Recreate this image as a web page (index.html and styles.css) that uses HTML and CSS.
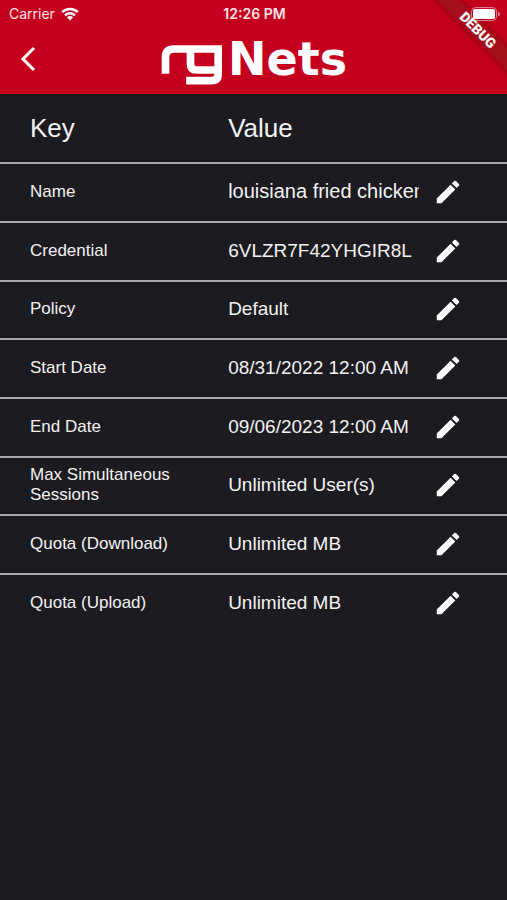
FILE: index.html
```html
<!DOCTYPE html>
<html lang="en">
<head>
    <meta charset="UTF-8">
    <meta name="viewport" content="width=device-width, initial-scale=1.0">
    <title>rgNets</title>
    <link rel="stylesheet" href="styles.css">
</head>
<body>

    <!-- shared pencil icon -->
    <svg class="sprite" aria-hidden="true">
        <symbol id="pencil" viewBox="0 0 24 24">
            <path d="M3 17.25V21h3.75L17.81 9.94l-3.75-3.75L3 17.25zM20.71 7.04a1 1 0 0 0 0-1.41l-2.34-2.34a1 1 0 0 0-1.41 0l-1.83 1.83 3.75 3.75 1.83-1.83z"/>
        </symbol>
    </svg>

    <header class="header">
        <div class="debug-banner">DEBUG</div>

        <div class="status-bar">
            <div class="carrier">
                <span>Carrier</span>
                <svg class="wifi" viewBox="0 0 18 14" aria-hidden="true">
                    <path d="M1.2 5.2a11 11 0 0 1 15.6 0M4 8.3a7 7 0 0 1 10 0"/>
                    <path class="wifi-dot" d="M5.9 10.3a4.4 4.4 0 0 1 6.2 0L9 13.6z"/>
                </svg>
            </div>
            <span class="time">12:26 PM</span>
            <svg class="battery" viewBox="0 0 29 14" aria-hidden="true">
                <rect class="battery-case" x="0.5" y="0.5" width="25" height="13" rx="4"/>
                <rect x="2" y="2" width="22" height="10" rx="2"/>
                <path class="battery-tip" d="M27 4.5q2 1 2 2.5t-2 2.5z"/>
            </svg>
        </div>

        <nav class="nav-bar">
            <button class="back" aria-label="Back">
                <svg viewBox="0 0 16 26" aria-hidden="true"><path d="M14 2L3 13l11 11"/></svg>
            </button>
            <div class="logo">
                <svg class="logo-mark" viewBox="24 45 183 120" aria-hidden="true">
                    <path d="M36 131V82Q36 57 61 57H194V132Q194 152 174 152H98"/>
                    <path d="M111 57V103Q111 120 128 120H194"/>
                </svg>
                <span class="logo-name">Nets</span>
            </div>
        </nav>
    </header>

    <main>
        <table class="details">
            <thead>
                <tr>
                    <th class="key">Key</th>
                    <th class="value">Value</th>
                    <td class="edit"></td>
                </tr>
            </thead>
            <tbody>
                <tr>
                    <td class="key">Name</td>
                    <td class="value long">louisiana fried chicken</td>
                    <td class="edit"><button aria-label="Edit name"><svg><use href="#pencil"/></svg></button></td>
                </tr>
                <tr>
                    <td class="key">Credential</td>
                    <td class="value">6VLZR7F42YHGIR8L</td>
                    <td class="edit"><button aria-label="Edit credential"><svg><use href="#pencil"/></svg></button></td>
                </tr>
                <tr>
                    <td class="key">Policy</td>
                    <td class="value">Default</td>
                    <td class="edit"><button aria-label="Edit policy"><svg><use href="#pencil"/></svg></button></td>
                </tr>
                <tr>
                    <td class="key">Start Date</td>
                    <td class="value">08/31/2022 12:00 AM</td>
                    <td class="edit"><button aria-label="Edit start date"><svg><use href="#pencil"/></svg></button></td>
                </tr>
                <tr>
                    <td class="key">End Date</td>
                    <td class="value">09/06/2023 12:00 AM</td>
                    <td class="edit"><button aria-label="Edit end date"><svg><use href="#pencil"/></svg></button></td>
                </tr>
                <tr>
                    <td class="key">Max Simultaneous Sessions</td>
                    <td class="value">Unlimited User(s)</td>
                    <td class="edit"><button aria-label="Edit max simultaneous sessions"><svg><use href="#pencil"/></svg></button></td>
                </tr>
                <tr>
                    <td class="key">Quota (Download)</td>
                    <td class="value">Unlimited MB</td>
                    <td class="edit"><button aria-label="Edit download quota"><svg><use href="#pencil"/></svg></button></td>
                </tr>
                <tr>
                    <td class="key">Quota (Upload)</td>
                    <td class="value">Unlimited MB</td>
                    <td class="edit"><button aria-label="Edit upload quota"><svg><use href="#pencil"/></svg></button></td>
                </tr>
            </tbody>
        </table>
    </main>

</body>
</html>
```
FILE: styles.css
```css
* {
    box-sizing: border-box;
}

body {
    margin: 0;
    min-height: 100vh;
    background-color: #1c1b1f;
    color: #f2f2f2;
    font-family: "Liberation Sans", Arial, sans-serif;
}

button {
    padding: 0;
    border: none;
    background: none;
    color: white;
    cursor: pointer;
}

svg {
    display: block;
    fill: currentColor;
}

.sprite {
    display: none;
}

/* Header */
.header {
    position: relative;
    overflow: hidden;
    height: 94px;
    background-color: #c5001e;
    color: white;
}

.status-bar {
    position: relative;
    display: grid;
    grid-template-columns: 1fr auto 1fr;
    align-items: center;
    height: 27px;
    padding: 0 7px 0 9px;
    font-family: Inter, sans-serif;
    font-size: 14px;
    color: #ffe3e6;
}

.carrier {
    display: flex;
    align-items: center;
    gap: 6px;
}

.wifi {
    width: 18px;
    height: 14px;
    fill: none;
    stroke: white;
    stroke-width: 2.4;
}

.wifi-dot {
    fill: white;
    stroke: none;
}

.time {
    font-weight: 600;
}

.battery {
    justify-self: end;
    width: 29px;
    height: 14px;
    fill: white;
}

.battery .battery-case {
    fill: none;
    stroke: rgba(255, 255, 255, 0.5);
}

.battery-tip {
    opacity: 0.5;
}

/* Corner ribbon */
.debug-banner {
    position: absolute;
    top: 22px;
    right: -41px;
    width: 140px;
    height: 16px;
    transform: rotate(45deg);
    background-color: #a50f1c;
    box-shadow: 0 0 8px rgba(0, 0, 0, 0.3);
    font-family: Roboto, sans-serif;
    font-size: 14px;
    font-weight: 900;
    line-height: 16px;
    text-align: center;
}

.nav-bar {
    display: grid;
    grid-template-columns: 56px 1fr 56px;
    align-items: start;
    height: 67px;
}

.back {
    display: flex;
    align-items: center;
    justify-content: center;
    height: 64px;
}

.back svg {
    width: 16px;
    height: 26px;
    fill: none;
    stroke: currentColor;
    stroke-width: 3;
}

/* Logo */
.logo {
    display: flex;
    align-items: flex-start;
    justify-content: center;
    gap: 4px;
    padding-top: 18px;
}

.logo-mark {
    width: 64px;
    height: 40px;
    fill: none;
    stroke: white;
    stroke-width: 23;
}

.logo-name {
    font-family: "DejaVu Sans", sans-serif;
    font-size: 46px;
    font-weight: bold;
    line-height: 28px;
}

/* Table */
.details {
    width: 100%;
    table-layout: fixed;
    border-collapse: separate;
    border-spacing: 0;
}

.details thead tr {
    height: 68px;
}

.details tbody tr {
    height: 59px;
}

.details tbody tr:nth-child(3n) {
    height: 58px;
}

.details th,
.details td {
    padding: 0;
    text-align: left;
    vertical-align: middle;
}

.details th {
    font-size: 26px;
    font-weight: normal;
}

.details tbody td {
    padding-bottom: 2px;
    border-top: 2px solid #a9a8ac;
}

.details .key {
    width: 45%;
    padding-left: 30px;
}

.details .edit {
    width: 88px;
    padding-left: 14px;
}

.details td.key {
    font-size: 17px;
    line-height: 20px;
}

.details td.value {
    overflow: hidden;
    font-size: 19px;
    white-space: nowrap;
}

.details td.long {
    font-size: 20px;
}

.edit button {
    display: block;
}

.edit svg {
    width: 30px;
    height: 30px;
}
```
